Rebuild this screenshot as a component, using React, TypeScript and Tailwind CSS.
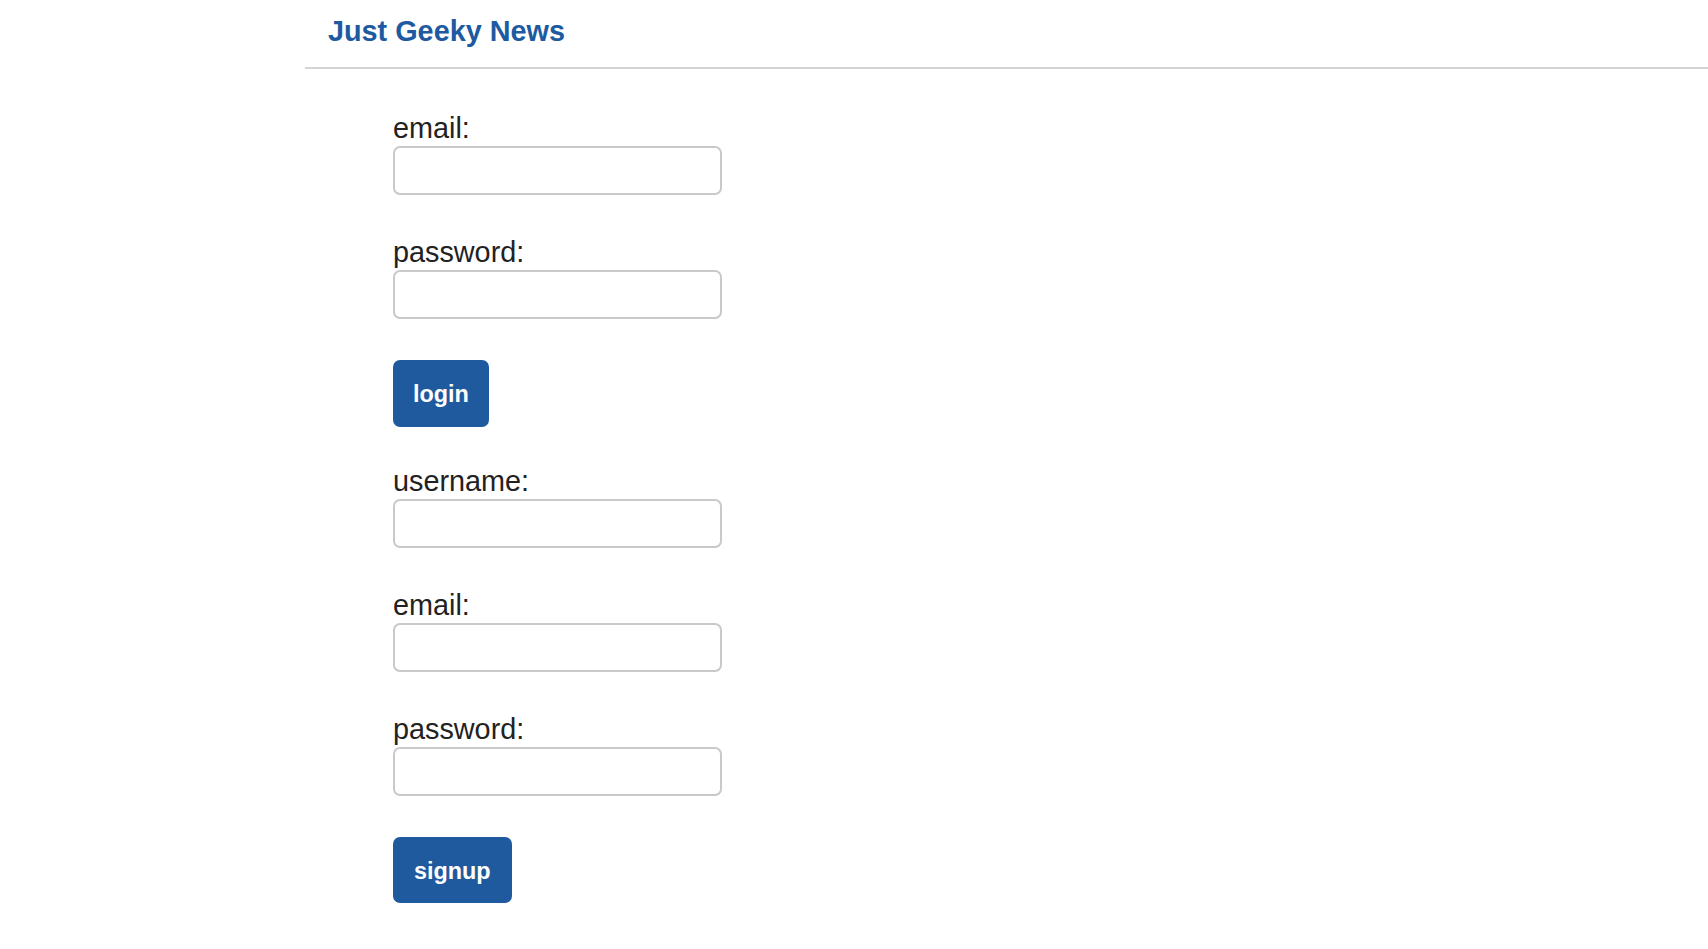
import React from 'react';

const fields = [
  { label: 'email:', type: 'email' },
  { label: 'password:', type: 'password' },
];

const signupFields = [
  { label: 'username:', type: 'text' },
  { label: 'email:', type: 'email' },
  { label: 'password:', type: 'password' },
];

function Field({ label, type }: { label: string; type: string }) {
  return (
    <div className="mb-[41px]">
      <label className="block text-[28.8px] leading-[32px] text-[#222] mb-[2px]">{label}</label>
      <input
        type={type}
        className="block w-[329px] h-[49px] rounded-[7px] border-2 border-[#c9c9c9] bg-white px-3 text-[24px] outline-none"
      />
    </div>
  );
}

export default function App() {
  return (
    <div className="min-h-screen bg-white font-['Liberation_Sans',Arial,sans-serif]">
      <div className="ml-[305px]">
        <header className="pt-[15px] pb-[20px] pl-[23px] border-b-2 border-[#d4d4d4]">
          <h1 className="text-[28.8px] leading-[32px] font-bold text-[#1d5aa1]">Just Geeky News</h1>
        </header>

        <main className="pl-[88px] pt-[43px]">
          <form onSubmit={(e) => e.preventDefault()}>
            {fields.map((f) => (
              <Field key={'l' + f.label} label={f.label} type={f.type} />
            ))}
            <button
              type="submit"
              className="mb-[38px] h-[67px] px-[20px] pt-[3px] rounded-[7px] bg-[#1f5a9e] text-white font-bold text-[23.4px]"
            >
              login
            </button>
          </form>

          <form onSubmit={(e) => e.preventDefault()}>
            {signupFields.map((f) => (
              <Field key={'s' + f.label} label={f.label} type={f.type} />
            ))}
            <button
              type="submit"
              className="h-[66px] px-[21px] pt-[3px] rounded-[7px] bg-[#1f5a9e] text-white font-bold text-[23.4px]"
            >
              signup
            </button>
          </form>
        </main>
      </div>
    </div>
  );
}
